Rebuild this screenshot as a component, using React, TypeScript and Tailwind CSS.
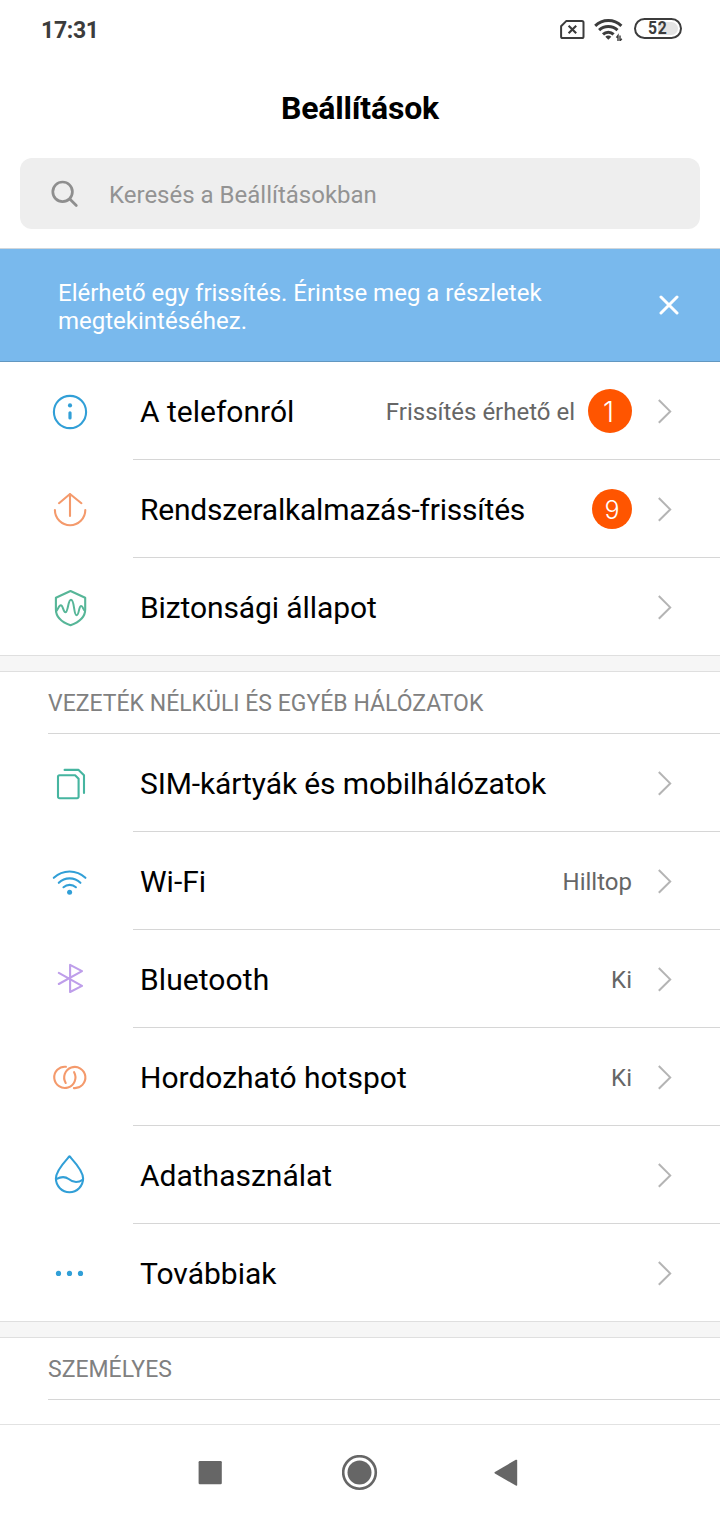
import type { ReactNode } from "react";

interface SettingsItem {
	label: string;
	labelClass?: string;
	icon: ReactNode;
	value?: string;
	badge?: ReactNode;
}

function Icon({ className, children }: { className: string; children: ReactNode }) {
	return (
		<svg
			viewBox="0 0 40 41"
			fill="none"
			stroke="currentColor"
			strokeWidth="2.1"
			strokeLinecap="round"
			strokeLinejoin="round"
			className={`w-10 h-[41px] shrink-0 ${className}`}
		>
			{children}
		</svg>
	);
}

const deviceItems: SettingsItem[] = [
	{
		label: "A telefonról",
		value: "Frissítés érhető el",
		badge: (
			<span className="flex size-11 items-center justify-center rounded-full bg-[#ff5500] pt-[3px] pr-[3px] font-['Inter',sans-serif] text-[28px] leading-none font-light text-white">
				1
			</span>
		),
		icon: (
			<Icon className="text-[#319fd7]">
				<circle cx="20" cy="22" r="16.1" />
				<circle cx="20" cy="15.4" r="2.1" fill="currentColor" stroke="none" />
				<path d="M20 22.8V28" strokeWidth="3.2" />
			</Icon>
		),
	},
	{
		label: "Rendszeralkalmazás-frissítés",
		labelClass: "tracking-[-0.21px]",
		badge: (
			<span className="flex size-10 items-center justify-center rounded-full bg-[#ff5500] pt-[3px] font-['Inter',sans-serif] text-[25px] leading-none font-light text-white">
				9
			</span>
		),
		icon: (
			<Icon className="text-[#f49a6c]">
				<path d="M9 15.2 20 6l11.4 9.2M20 6v22" />
				<path d="M4.9 22a15.2 15.2 0 0 0 30.4 0" />
			</Icon>
		),
	},
	{
		label: "Biztonsági állapot",
		labelClass: "tracking-[-0.1px]",
		icon: (
			<Icon className="text-[#57b698]">
				<path d="M20.5 5 35.2 11.7V23.5C35.2 31.5 28 36.6 20.5 39.2 13 36.6 5.9 31.5 5.9 23.5V11.7Z" />
				<path
					d="M6 25.3C8 24.6 8.4 19.3 10.8 19.3 13.2 19.3 13.2 26.2 15.4 26.2 18.3 26.2 17.8 13.7 21 13.7 24.6 13.7 23.6 29.3 26.6 29.3 29.2 29.3 28.6 20 31.2 20 33.2 20 32.8 24 35 24.4"
					strokeWidth="2"
				/>
			</Icon>
		),
	},
];

const networkItems: SettingsItem[] = [
	{
		label: "SIM-kártyák és mobilhálózatok",
		labelClass: "tracking-[-0.11px]",
		icon: (
			<Icon className="text-[#46b5a0]">
				<path d="M9.5 13.2H25.1L28.6 16.8V34.7a1.5 1.5 0 0 1-1.5 1.5H9.5a1.5 1.5 0 0 1-1.5-1.5V14.7a1.5 1.5 0 0 1 1.5-1.5Z" />
				<path d="M14.6 7.9H28.6L34 13.3V31" />
			</Icon>
		),
	},
	{
		label: "Wi-Fi",
		value: "Hilltop",
		icon: (
			<Icon className="text-[#319fd7]">
				<path d="M3.8 17.8A23 23 0 0 1 35.4 17.8" />
				<path d="M8.8 22.8A15.4 15.4 0 0 1 30.4 22.8" />
				<path d="M13.5 27.2A9.4 9.4 0 0 1 25.9 27.2" />
				<circle cx="19.6" cy="32.2" r="2.5" fill="currentColor" stroke="none" />
			</Icon>
		),
	},
	{
		label: "Bluetooth",
		labelClass: "tracking-[0.08px]",
		value: "Ki",
		icon: (
			<Icon className="text-[#be9eea]">
				<path d="M8.8 14.9 32 27.9 20.1 34V6.9L32 13.1 8.8 26" />
			</Icon>
		),
	},
	{
		label: "Hordozható hotspot",
		value: "Ki",
		icon: (
			<Icon className="text-[#f49a6c]">
				<path d="M15.9 10.8A10.6 10.6 0 1 0 24.1 16.2" />
				<path d="M15.7 27A10.6 10.6 0 1 1 23.9 32.1" />
			</Icon>
		),
	},
	{
		label: "Adathasználat",
		icon: (
			<Icon className="text-[#319fd7]">
				<path d="M19.5 2.3C14.5 8 5.9 16.5 5.9 24.6a13.6 13.6 0 0 0 27.2 0C33.1 16.5 24.5 8 19.5 2.3Z" />
				<path d="M6.2 25.1C10.5 22.8 15.3 22.5 18.7 25 22.5 28.2 27.5 29.3 33 25.6" />
			</Icon>
		),
	},
	{
		label: "Továbbiak",
		icon: (
			<Icon className="text-[#319fd7]">
				<g fill="currentColor" stroke="none">
					<circle cx="8.5" cy="21.4" r="2.6" />
					<circle cx="19.5" cy="21.4" r="2.6" />
					<circle cx="30.5" cy="21.4" r="2.6" />
				</g>
			</Icon>
		),
	},
];

function StatusBar() {
	return (
		<div className="flex h-[60px] items-center justify-between pl-[41px] pr-[38px] text-[#3c3c3c]">
			<span className="pt-0.5 text-[23px] font-bold tracking-[-0.3px]">17:31</span>
			<div className="flex items-center pb-[3px]">
				<svg viewBox="0 0 26 22" fill="none" stroke="currentColor" strokeWidth="2" className="mr-[9px] h-[22px] w-[26px]">
					<path d="M7.4 2.9H22.9a1.6 1.6 0 0 1 1.6 1.6V18.5a1.6 1.6 0 0 1-1.6 1.6H3.7a1.6 1.6 0 0 1-1.6-1.6V8.2Z" />
					<path d="M9.6 7.7 17.2 15.3M17.2 7.7 9.6 15.3" strokeWidth="2.1" />
				</svg>
				<svg viewBox="0 0 30 24" fill="none" stroke="currentColor" strokeWidth="3" className="mr-2.5 h-6 w-[30px]">
					<path d="M1.2 8.8A19 19 0 0 1 27.4 8.8" />
					<path d="M5.1 13.2A13.2 13.2 0 0 1 23.5 13.2" />
					<path d="M9 17.3A7.6 7.6 0 0 1 19.6 17.3" />
					<path d="M11.3 19.7a4.2 4.2 0 0 1 6 0L14.3 22.8Z" fill="currentColor" stroke="none" />
					<path d="M22.4 20.6 24 18.4V23.9M26 18.4V23.9L27.8 21.7" strokeWidth="1.4" />
				</svg>
				<div className="flex h-[21px] w-12 items-center justify-center rounded-full border-2 border-[#3c3c3c] p-[2px]">
					<div className="flex h-[13px] w-10 items-center justify-center rounded-full bg-linear-to-r from-white from-50% to-[#e4e4e4] to-50% text-[17.5px] leading-none font-bold">
						<span className="scale-x-90 pt-px tracking-[0.6px]">52</span>
					</div>
				</div>
			</div>
		</div>
	);
}

function SettingsRow({ item, last }: { item: SettingsItem; last: boolean }) {
	return (
		<div className={`flex h-[98px] pl-[50px] ${last ? "border-b border-[#dfdfdf]" : ""}`}>
			<div className="flex w-[83px] items-center pb-px">{item.icon}</div>
			<div className={`flex flex-1 items-center pl-[7px] pr-12 ${last ? "" : "border-b border-[#d6d6d6]"}`}>
				<span className={`flex-1 whitespace-nowrap pt-0.5 text-[30px] text-black ${item.labelClass ?? ""}`}>
					{item.label}
				</span>
				{item.value && <span className="pt-0.5 text-[24px] text-[#666]">{item.value}</span>}
				{item.badge && <div className="ml-[13px]">{item.badge}</div>}
				<svg viewBox="0 0 16 26" fill="none" stroke="#b4b4b4" strokeWidth="2" className="ml-6 h-[26px] w-4">
					<path d="M2.8 2 14.2 13.4 2.8 24.8" />
				</svg>
			</div>
		</div>
	);
}

function SettingsList({ items }: { items: SettingsItem[] }) {
	return (
		<div>
			{items.map((item, i) => (
				<SettingsRow key={item.label} item={item} last={i === items.length - 1} />
			))}
		</div>
	);
}

function SectionHeader({ title }: { title: string }) {
	return (
		<div>
			<div className="h-4 border-b border-[#dfdfdf] bg-[#f6f6f6]" />
			<div className="ml-12 flex h-[62px] items-center border-b border-[#d6d6d6] pt-1 text-[23px] text-[#808080]">
				{title}
			</div>
		</div>
	);
}

function NavigationBar() {
	return (
		<div className="flex h-24 items-center justify-between border-t border-[#e2e2e2] pl-[198px] pr-[202px] text-[#666]">
			<svg viewBox="0 0 24 24" fill="currentColor" className="size-6">
				<rect x="0.6" y="0" width="23.2" height="23.2" rx="1.2" />
			</svg>
			<svg viewBox="0 0 36 36" className="ml-[3px] size-9">
				<circle cx="17.5" cy="17.5" r="16.3" fill="none" stroke="currentColor" strokeWidth="2.6" />
				<circle cx="17.5" cy="17.5" r="12" fill="currentColor" />
			</svg>
			<svg viewBox="0 0 24 28" fill="currentColor" className="h-7 w-6">
				<path d="M.9 13 21.8.8Q23.2.3 23.2 1.5V25.9Q23.2 27.1 21.8 26.5L.9 14.4Q0 13.7 .9 13Z" />
			</svg>
		</div>
	);
}

export default function App() {
	return (
		<div className="flex h-[1520px] w-[720px] flex-col overflow-hidden bg-white font-['Roboto',sans-serif]">
			<StatusBar />
			<div className="flex h-[98px] items-center justify-center pb-0.5">
				<h1 className="text-[32px] font-bold tracking-[-0.2px] text-black">Beállítások</h1>
			</div>
			<div className="mx-5 flex h-[71px] items-center rounded-xl bg-[#eee] pl-[30px]">
				<svg viewBox="0 0 30 30" fill="none" stroke="#8e8e8e" strokeWidth="2.7" strokeLinecap="round" className="size-[30px]">
					<circle cx="12.6" cy="12.8" r="9.8" />
					<path d="M19.8 20 26.3 26.5" />
				</svg>
				<span className="ml-[29px] pt-0.5 text-[24px] text-[#939393]">Keresés a Beállításokban</span>
			</div>
			<div className="mt-[19px] flex h-[114px] items-center justify-between border-t border-b border-t-[#d0d6db] border-b-[#6297c0] bg-[#79b9ed] pl-[58px] pr-[41px]">
				<p className="w-[520px] pt-1 text-[24px] leading-7 text-white">
					Elérhető egy frissítés. Érintse meg a részletek megtekintéséhez.
				</p>
				<svg viewBox="0 0 20 20" stroke="white" strokeWidth="3" strokeLinecap="round" className="size-5">
					<path d="M2 2 18 18M18 2 2 18" />
				</svg>
			</div>
			<SettingsList items={deviceItems} />
			<SectionHeader title="VEZETÉK NÉLKÜLI ÉS EGYÉB HÁLÓZATOK" />
			<SettingsList items={networkItems} />
			<SectionHeader title="SZEMÉLYES" />
			<div className="flex-1" />
			<NavigationBar />
		</div>
	);
}
